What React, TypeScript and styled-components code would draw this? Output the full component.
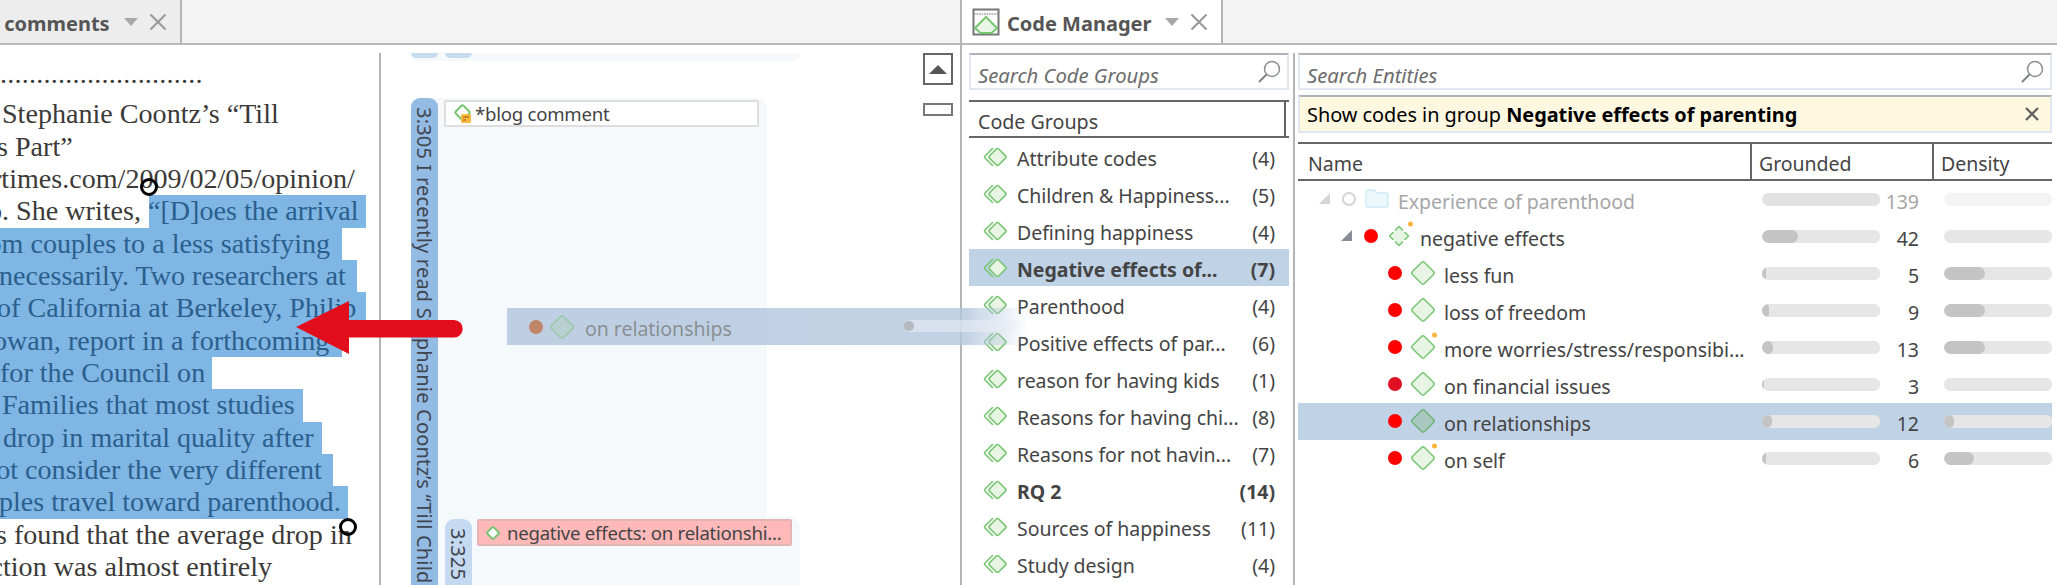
import React from "react";
import styled, { createGlobalStyle } from "styled-components";

const UI = `"Noto Sans", "Open Sans", sans-serif`;
const Global = createGlobalStyle`
  html, body { margin: 0; padding: 0; background: #fff; }
  #root { width: 2057px; height: 585px; overflow: hidden; }
`;

const Page = styled.div`
  position: relative; width: 2057px; height: 585px; overflow: hidden; display: flex;
  font-family: ${UI}; font-size: 19.5px; letter-spacing: -0.03px; color: #444; background: #fff;
`;
const Txt = styled.span<{ $drop?: number }>`padding-top: ${p => p.$drop ?? 4}px; line-height: 1.2;`;
const LeftPane = styled.div`
  width: 962px; flex: none; display: flex; flex-direction: column; border-right: 2px solid #b5b5b5; box-sizing: border-box; height: 585px;
`;
const RightPane = styled.div`
  flex: 1; display: flex; flex-direction: column; min-width: 0; height: 585px;
`;
const TabStrip = styled.div`
  height: 45px; flex: none; box-sizing: border-box; display: flex; background: #f4f4f4; border-bottom: 2px solid #b8b8b8;
`;
const Tab = styled.div<{ $active?: boolean; $width: number }>`
  width: ${p => p.$width}px; height: 45px; flex: none; box-sizing: border-box; display: flex; align-items: center; overflow: hidden;
  background: ${p => (p.$active ? "#fff" : "#ededed")};
  border-right: 2px solid #b5b5b5;
  border-bottom: 2px solid #b8b8b8;
  padding-left: ${p => (p.$active ? 10 : 0)}px;
  font-weight: 700; font-size: 20px; letter-spacing: 0; color: #555; white-space: nowrap;
`;
const TabIcon = styled.svg`width: 28px; height: 28px; margin-right: 7px; flex: none;`;
const ClippedTitle = styled.span`margin-left: -10px; padding-top: 4px; line-height: 1.2;`;
const TabChevron = styled.svg`width: 14px; height: 8px; margin-left: 14px; flex: none;`;
const TabClose = styled.svg`width: 18px; height: 18px; margin-left: 11px; flex: none;`;

const LeftBody = styled.div`flex: 1; display: flex; padding-top: 8px; min-height: 0;`;
const DocColumn = styled.div`
  width: 381px; flex: none; box-sizing: border-box; border-right: 2px solid #b5b5b5; overflow: hidden;
  padding-top: 5px; font-family: "Liberation Serif", serif; font-size: 28.1px; letter-spacing: 0; color: #3c3a38;
`;
const DocRow = styled.div<{ $from?: number; $to?: number; $gap?: number }>`
  height: 32.33px; line-height: 32.33px; white-space: nowrap; margin-top: ${p => p.$gap ?? 0}px;
  background: ${p => (p.$to ? `linear-gradient(to right, transparent ${p.$from ?? 0}px, #7fb6e3 ${p.$from ?? 0}px, #7fb6e3 ${p.$to}px, transparent ${p.$to}px)` : "none")};
`;
const DocText = styled.div<{ $start: number }>`margin-left: ${p => p.$start}px;`;
const DotLeader = styled.span`letter-spacing: 0.22px;`;
const Sel = styled.span`color: #2a5f8e;`;

const MarginColumn = styled.div`flex: 1; display: flex; min-width: 0; padding-left: 30px; position: relative;`;
const MarginFlow = styled.div`width: 400px; flex: none; display: flex; flex-direction: column;`;
const QuoteStub = styled.div`
  width: 389px; height: 8px; flex: none; background: #f5f9fc; border-radius: 0 0 10px 10px; display: flex; gap: 7px; align-items: flex-start;
`;
const StubBar = styled.div`width: 27px; height: 5px; background: #c8dcf1; border-radius: 0 0 9px 9px;`;
const QuoteCard = styled.div`
  margin-top: 37px; width: 356px; flex: 1; display: flex; background: #f5f9fc; border-radius: 10px 10px 0 0; min-height: 0;
`;
const QuoteBar = styled.div<{ $light?: boolean }>`
  width: 27px; flex: none; box-sizing: border-box; overflow: hidden; border-radius: 9px 9px 0 0;
  background: ${p => (p.$light ? "#c5daf1" : "#94bbe4")};
  writing-mode: vertical-rl; white-space: nowrap; padding-top: 9px; line-height: 27px; color: #3f4650; font-size: 20px; letter-spacing: 0.2px;
`;
const QuoteBody = styled.div`flex: 1; min-width: 0; display: flex; flex-direction: column; padding: 2px 8px 0 6px;`;
const CodeLabel = styled.div<{ $pink?: boolean }>`
  height: 27px; box-sizing: border-box; flex: none; display: flex; align-items: center; overflow: hidden; white-space: nowrap;
  width: 315px; border: 2px solid ${p => (p.$pink ? "#e4b4b4" : "#dedede")};
  border-radius: 2px; background: ${p => (p.$pink ? "#ffb9b9" : "#fff")}; padding-left: 6px; font-size: 18.6px; letter-spacing: -0.25px; color: #444;
`;
const LabelIcon = styled.svg`width: 22px; height: 22px; flex: none; margin-right: 1px;`;
const PinkIcon = styled.svg`width: 16px; height: 16px; flex: none; margin-right: 6px;`;
const NestedCard = styled.div`
  margin-top: auto; margin-left: 1px; width: 355px; height: 68px; flex: none; display: flex; gap: 5px; background: #f5f9fc; border-radius: 0 10px 0 0; padding-top: 2px; box-sizing: border-box;
`;
const SideTools = styled.div`position: absolute; right: 7px; top: 0; width: 30px; display: flex; flex-direction: column; gap: 18px;`;
const UpButton = styled.div`
  width: 30px; height: 32px; box-sizing: border-box; border: 2px solid #666; display: flex; align-items: center; justify-content: center;
  &::before { content: ""; border-left: 9px solid transparent; border-right: 9px solid transparent; border-bottom: 9px solid #555; }
`;
const MiniMap = styled.div`width: 30px; height: 13px; box-sizing: border-box; border: 2px solid #777;`;

const Ghost = styled.div`
  position: absolute; left: 507px; top: 308px; width: 521px; height: 37px; display: flex; align-items: center; padding-left: 22px; box-sizing: border-box;
  background: linear-gradient(to right, rgba(178,198,222,.82) 0, rgba(178,198,222,.8) 88%, rgba(178,198,222,0) 100%);
  color: #8a8f93; font-size: 19.5px;
`;
const GhostDot = styled.div`width: 14px; height: 14px; border-radius: 50%; background: #c08468; flex: none; margin-right: 6px;`;
const GhostTrack = styled.div`
  position: absolute; left: 397px; top: 12px; width: 124px; height: 12px; border-radius: 6px 0 0 6px;
  background: linear-gradient(to right, rgba(232,236,244,.6) 70%, rgba(232,236,244,0) 100%);
  &::before { content: ""; position: absolute; left: 0; top: 1px; width: 10px; height: 10px; border-radius: 50%; background: #b4b9bf; }
`;
const GhostIcon = styled.svg`width: 26px; height: 26px; flex: none; margin-right: 10px; opacity: .55;`;
const ArrowSvg = styled.svg`position: absolute; left: 296px; top: 301px; width: 168px; height: 54px;`;
const Cursor = styled.div<{ $x: number; $y: number }>`
  position: absolute; left: ${p => p.$x - 9}px; top: ${p => p.$y - 9}px; width: 18px; height: 18px; box-sizing: border-box; border: 3px solid #000; border-radius: 50%;
`;

const RightBody = styled.div`flex: 1; display: flex; padding-top: 8px; min-height: 0;`;
const GroupColumn = styled.div`width: 333px; flex: none; box-sizing: border-box; border-right: 2px solid #b5b5b5; padding-left: 7px; padding-right: 4px;`;
const EntityColumn = styled.div`flex: 1; min-width: 0; padding-left: 3px; padding-right: 5px; display: flex; flex-direction: column;`;
const SearchBox = styled.div`
  height: 37px; flex: none; box-sizing: border-box; display: flex; align-items: center; justify-content: space-between;
  border: 2px solid #e1e7f0; border-top-color: #aeb3ba; padding: 0 6px 0 7px; font-style: italic; color: #6c6c6c; font-size: 20.3px;
`;
const SearchIcon = styled.svg`width: 24px; height: 24px; flex: none;`;
const GroupHeader = styled.div`
  margin-top: 10px; height: 38px; box-sizing: border-box; border-top: 2px solid #666; border-bottom: 2px solid #666; display: flex; align-items: center; padding-left: 9px; position: relative; font-size: 19.7px;
  &::after { content: ""; position: absolute; right: 3px; top: 0; bottom: 0; width: 2px; background: #666; }
`;
const GroupRow = styled.div<{ $selected?: boolean; $bold?: boolean }>`
  height: 37px; display: flex; align-items: center; padding: 0 14px; box-sizing: border-box; white-space: nowrap;
  background: ${p => (p.$selected ? "#c0d2e6" : "transparent")}; font-weight: ${p => (p.$bold ? 700 : 400)};
`;
const GroupIcon = styled.svg`width: 24px; height: 20px; flex: none; margin-right: 10px;`;
const GroupName = styled(Txt)`flex: 1; min-width: 0;`;
const FilterBar = styled.div`
  margin-top: 5px; height: 38px; flex: none; box-sizing: border-box; display: flex; align-items: center; justify-content: space-between;
  background: #fff8e1; border: 2px solid #e1e7f0; border-top-color: #aeb3ba; padding: 0 10px 0 7px; color: #000; font-size: 19.9px;
`;
const FilterClose = styled.svg`width: 16px; height: 16px; flex: none;`;
const GridHeader = styled.div`
  margin-top: 9px; height: 39px; flex: none; box-sizing: border-box; display: grid; grid-template-columns: 452px 182px 1fr; border-top: 2px solid #666; border-bottom: 2px solid #666;
`;
const HeaderCell = styled.div<{ $first?: boolean }>`
  display: flex; align-items: center; padding-left: ${p => (p.$first ? 10 : 7)}px; box-sizing: border-box; border-left: ${p => (p.$first ? "none" : "2px solid #666")};
`;
const EntityRow = styled.div<{ $selected?: boolean }>`
  height: 37px; flex: none; display: grid; grid-template-columns: 452px 182px 1fr; align-items: center; white-space: nowrap;
  background: ${p => (p.$selected ? "#c0d2e6" : "transparent")};
`;
const NameCell = styled.div<{ $indent: number; $faded?: boolean }>`
  display: flex; align-items: center; padding-left: ${p => p.$indent}px; color: ${p => (p.$faded ? "#a6a6a6" : "#444")};
`;
const TwistySlot = styled.div`width: 23px; height: 12px; flex: none; display: flex;`;
const Twisty = styled.svg`width: 11px; height: 11px;`;
const StatusDot = styled.div<{ $color: string; $ring?: boolean }>`
  width: 14px; height: 14px; flex: none; box-sizing: border-box; border-radius: 50%; margin-right: 8px;
  background: ${p => (p.$ring ? "transparent" : p.$color)}; border: ${p => (p.$ring ? `2px solid ${p.$color}` : "none")};
`;
const RowIcon = styled.svg`width: 26px; height: 26px; flex: none; margin-right: 8px; overflow: visible;`;
const BarCell = styled.div`display: grid; grid-template-columns: 118px 39px; align-items: center; padding-left: 12px; text-align: right;`;
const DensityCell = styled.div`padding-left: 12px; min-width: 0;`;
const Track = styled.div<{ $faded?: boolean; $light?: boolean }>`
  height: 13px; border-radius: 7px 6px 6px 7px; overflow: hidden; background: ${p => (p.$light ? "#f4f4f4" : p.$faded ? "#e2e2e2" : "#e6e6e6")};
`;
const Fill = styled.div`height: 100%; background: #c4c4c4; border-radius: 7px;`;
const CountText = styled(Txt)<{ $faded?: boolean }>`color: ${p => (p.$faded ? "#a6a6a6" : "#444")};`;

const GREEN = "#78c672";
const FILL = "#e8f4e4";

const Diamond = ({ selected, comment, dashed }: { selected?: boolean; comment?: boolean; dashed?: boolean }) => (
  <RowIcon viewBox="0 0 26 26">
    {dashed ? (
      <g>
        <rect x="6.5" y="6.5" width="13" height="13" rx="2" transform="rotate(45 13 13)" fill={FILL} stroke="none" />
        <path d="M3.5 13 L7 9.5 M3.5 13 L7 16.5 M13 3.5 L9.5 7 M13 3.5 L16.5 7 M22.5 13 L19 9.5 M22.5 13 L19 16.5 M13 22.5 L9.5 19 M13 22.5 L16.5 19" fill="none" stroke={GREEN} strokeWidth="1.6" strokeLinecap="round" />
      </g>
    ) : (
      <rect x="4.5" y="4.5" width="17" height="17" rx="2.4" transform="rotate(45 13 13)" fill={selected ? "#a9c8c0" : FILL} stroke={selected ? "#6fb47a" : GREEN} strokeWidth="1.5" />
    )}
    {comment && <circle cx="24.5" cy="1" r="2.5" fill="#fdb53c" />}
  </RowIcon>
);

const DoubleDiamond = () => (
  <GroupIcon viewBox="0 0 24 20">
    <path d="M9.5 1.5 L2 9 Q1 10 2 11 L9.5 18.5" fill="none" stroke={GREEN} strokeWidth="1.6" strokeLinecap="round" />
    <rect x="8" y="3.5" width="13" height="13" rx="2" transform="rotate(45 14.5 10)" fill={FILL} stroke={GREEN} strokeWidth="1.6" />
  </GroupIcon>
);

const Magnifier = () => (
  <SearchIcon viewBox="0 0 24 24">
    <circle cx="15" cy="9" r="7.5" fill="none" stroke="#8a8f94" strokeWidth="1.5" />
    <path d="M9.5 14.5 L2 22" fill="none" stroke="#7d8287" strokeWidth="1.9" />
  </SearchIcon>
);

const Chevron = () => (
  <TabChevron viewBox="0 0 14 8"><path d="M0 0 H14 L7 8 Z" fill="#a8a8a8" /></TabChevron>
);
const CloseX = () => (
  <TabClose viewBox="0 0 18 18"><path d="M1.5 1.5 L16.5 16.5 M16.5 1.5 L1.5 16.5" stroke="#9a9a9a" strokeWidth="2.2" /></TabClose>
);

const docRows: { t?: string; s?: string; start: number; from?: number; to?: number; gap?: number }[] = [
  { t: "Stephanie Coontz’s “Till", start: 2, gap: 8 },
  { t: "s Part”", start: -3 },
  { t: "rtimes.com/2009/02/05/opinion/", start: -8 },
  { t: "o. She writes, ", s: "“[D]oes the arrival", start: -12, from: 149, to: 366 },
  { s: "om couples to a less satisfying", start: -12.5, to: 342 },
  { s: "necessarily. Two researchers at", start: -1, to: 357 },
  { s: "of California at Berkeley, Philip", start: -3, to: 366 },
  { s: "owan, report in a forthcoming", start: -7, to: 342 },
  { s: "for the Council on", start: 0, to: 212 },
  { s: "Families that most studies", start: 2, to: 303 },
  { s: "drop in marital quality after", start: 3, to: 322 },
  { s: "ot consider the very different", start: -3.8, to: 333 },
  { s: "ples travel toward parenthood.", start: -1, to: 348 },
  { t: "s found that the average drop in", start: -4 },
  { t: "ction was almost entirely", start: -9.5 },
];

const groups: { n: string; c: number; sel?: boolean; bold?: boolean }[] = [
  { n: "Attribute codes", c: 4 },
  { n: "Children & Happiness...", c: 5 },
  { n: "Defining happiness", c: 4 },
  { n: "Negative effects of...", c: 7, sel: true, bold: true },
  { n: "Parenthood", c: 4 },
  { n: "Positive effects of par...", c: 6 },
  { n: "reason for having kids", c: 1 },
  { n: "Reasons for having chi...", c: 8 },
  { n: "Reasons for not havin...", c: 7 },
  { n: "RQ 2", c: 14, bold: true },
  { n: "Sources of happiness", c: 11 },
  { n: "Study design", c: 4 },
];

const entities: { n: string; c: number; g: number; d: number; sel?: boolean; comment?: boolean; dot?: string }[] = [
  { n: "less fun", c: 5, g: 4, d: 41 },
  { n: "loss of freedom", c: 9, g: 7, d: 41 },
  { n: "more worries/stress/responsibi...", c: 13, g: 11, d: 41, comment: true },
  { n: "on financial issues", c: 3, g: 2, d: 0, dot: "#e01024" },
  { n: "on relationships", c: 12, g: 10, d: 10, sel: true },
  { n: "on self", c: 6, g: 4, d: 30, comment: true },
];

const Bars = ({ g, d, c }: { g: number; d: number; c: number }) => (
  <>
    <BarCell>
      <Track><Fill style={{ width: g }} /></Track>
      <CountText>{c}</CountText>
    </BarCell>
    <DensityCell><Track><Fill style={{ width: d }} /></Track></DensityCell>
  </>
);

export default function App() {
  return (
    <Page>
      <Global />
      <LeftPane>
        <TabStrip>
          <Tab $width={182}>
            <ClippedTitle>r comments</ClippedTitle>
            <Chevron />
            <CloseX />
          </Tab>
        </TabStrip>
        <LeftBody>
          <DocColumn>
            <DocRow>
              <DocText $start={0}><DotLeader>............................</DotLeader></DocText>
            </DocRow>
            {docRows.map((r, i) => (
              <DocRow key={i} $from={r.from} $to={r.to} $gap={r.gap}>
                <DocText $start={r.start}>{r.t}{r.s && <Sel>{r.s}</Sel>}</DocText>
              </DocRow>
            ))}
          </DocColumn>
          <MarginColumn>
            <MarginFlow>
              <QuoteStub><StubBar /><StubBar /></QuoteStub>
              <QuoteCard>
                <QuoteBar>3:305 I recently read Stephanie Coontz’s “Till Children Do Us Part”</QuoteBar>
                <QuoteBody>
                  <CodeLabel>
                    <LabelIcon viewBox="0 0 22 22">
                      <rect x="5" y="4" width="11" height="11" rx="1.5" transform="rotate(45 10.5 9.5)" fill="#fff" stroke={GREEN} strokeWidth="2" />
                      <rect x="9" y="11" width="10" height="9" rx="1.5" fill="#fdb83f" />
                      <path d="M11 14 H17 M11 17 H14" stroke="#8a5a10" strokeWidth="1.2" />
                    </LabelIcon>
                    *blog comment
                  </CodeLabel>
                  <NestedCard>
                    <QuoteBar $light>3:325 The average</QuoteBar>
                    <CodeLabel $pink>
                      <PinkIcon viewBox="0 0 16 16">
                        <rect x="3.5" y="3.5" width="9" height="9" rx="1" transform="rotate(45 8 8)" fill="#fff" stroke={GREEN} strokeWidth="2" />
                      </PinkIcon>
                      negative effects: on relationshi...
                    </CodeLabel>
                  </NestedCard>
                </QuoteBody>
              </QuoteCard>
            </MarginFlow>
            <SideTools>
              <UpButton />
              <MiniMap />
            </SideTools>
          </MarginColumn>
        </LeftBody>
      </LeftPane>
      <RightPane>
        <TabStrip>
          <Tab $active $width={261}>
            <TabIcon viewBox="0 0 28 28">
              <rect x="1.5" y="1.5" width="25" height="25" fill="#fff" stroke="#777" strokeWidth="2" />
              <path d="M2 6 H26" stroke="#999" strokeWidth="1.4" strokeDasharray="1.5 1" />
              <path d="M3 20 L14 9 L25 20 L19.5 25 H8.5 Z" fill="#eaf6e6" stroke={GREEN} strokeWidth="2" />
            </TabIcon>
            <Txt>Code Manager</Txt>
            <Chevron />
            <CloseX />
          </Tab>
        </TabStrip>
        <RightBody>
          <GroupColumn>
            <SearchBox><Txt $drop={7}>Search Code Groups</Txt><Magnifier /></SearchBox>
            <GroupHeader><Txt $drop={5}>Code Groups</Txt></GroupHeader>
            {groups.map(g => (
              <GroupRow key={g.n} $selected={g.sel} $bold={g.bold}>
                <DoubleDiamond />
                <GroupName $drop={5}>{g.n}</GroupName>
                <Txt $drop={5}>({g.c})</Txt>
              </GroupRow>
            ))}
          </GroupColumn>
          <EntityColumn>
            <SearchBox><Txt $drop={7}>Search Entities</Txt><Magnifier /></SearchBox>
            <FilterBar>
              <Txt $drop={2}>Show codes in group <b>Negative effects of parenting</b></Txt>
              <FilterClose viewBox="0 0 16 16"><path d="M2 2 L14 14 M14 2 L2 14" stroke="#666" strokeWidth="2.4" /></FilterClose>
            </FilterBar>
            <GridHeader>
              <HeaderCell $first><Txt>Name</Txt></HeaderCell>
              <HeaderCell><Txt>Grounded</Txt></HeaderCell>
              <HeaderCell><Txt>Density</Txt></HeaderCell>
            </GridHeader>
            <EntityRow>
              <NameCell $indent={21} $faded>
                <TwistySlot><Twisty viewBox="0 0 11 11"><path d="M11 0 V11 H0 Z" fill="#d4d6d8" /></Twisty></TwistySlot>
                <StatusDot $color="#d4d4d4" $ring />
                <RowIcon viewBox="0 0 26 26">
                  <path d="M2 6 Q2 4 4 4 H10 L13 7 H23 Q24 7 24 8 V20 Q24 21 23 21 H3 Q2 21 2 20 Z" fill="#eef7fc" stroke="#cfeaf6" strokeWidth="1.4" />
                </RowIcon>
                <Txt>Experience of parenthood</Txt>
              </NameCell>
              <BarCell>
                <Track $faded />
                <CountText $faded>139</CountText>
              </BarCell>
              <DensityCell><Track $light /></DensityCell>
            </EntityRow>
            <EntityRow>
              <NameCell $indent={43}>
                <TwistySlot><Twisty viewBox="0 0 11 11"><path d="M11 0 V11 H0 Z" fill="#8a8d96" /></Twisty></TwistySlot>
                <StatusDot $color="#fe0000" />
                <Diamond dashed comment />
                <Txt>negative effects</Txt>
              </NameCell>
              <Bars g={36} d={0} c={42} />
            </EntityRow>
            {entities.map(e => (
              <EntityRow key={e.n} $selected={e.sel}>
                <NameCell $indent={67}>
                  <TwistySlot />
                  <StatusDot $color={e.dot ?? "#fe0000"} />
                  <Diamond selected={e.sel} comment={e.comment} />
                  <Txt>{e.n}</Txt>
                </NameCell>
                <Bars g={e.g} d={e.d} c={e.c} />
              </EntityRow>
            ))}
          </EntityColumn>
        </RightBody>
      </RightPane>
      <Ghost>
        <GhostDot />
        <GhostIcon viewBox="0 0 26 26">
          <rect x="4.5" y="4.5" width="17" height="17" rx="2.4" transform="rotate(45 13 13)" fill="#b6d2c6" stroke={GREEN} strokeWidth="1.5" />
        </GhostIcon>
        <Txt>on relationships</Txt>
        <GhostTrack />
      </Ghost>
      <ArrowSvg viewBox="0 0 168 54">
        <path d="M0 26 L53 0 V19 H158 A8.5 8.5 0 0 1 158 36.5 H53 V53 Z" fill="#e30e1c" />
      </ArrowSvg>
      <Cursor $x={149} $y={187} />
      <Cursor $x={348} $y={527} />
    </Page>
  );
}
